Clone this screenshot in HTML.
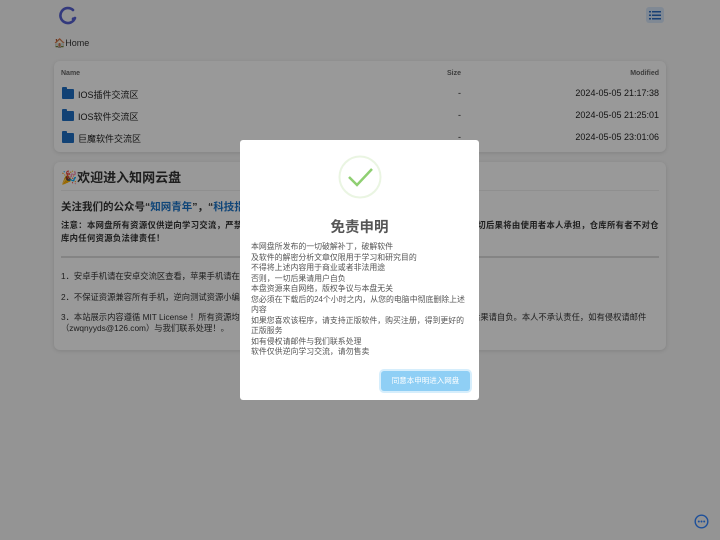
<!DOCTYPE html>
<html><head><meta charset="utf-8"><style>
*{box-sizing:border-box;margin:0;padding:0}
body{width:720px;height:540px;overflow:hidden;background:#f7f7f7;font-family:"Liberation Sans","Noto Sans CJK SC",sans-serif;color:#333;position:relative}
.a{position:absolute;white-space:nowrap}
.card{position:absolute;background:#fff;border-radius:6px;box-shadow:0 1px 4px rgba(0,0,0,.12)}
.folder{display:inline-block;width:12px;height:10px;background:#1e6fc4;border-radius:1px;vertical-align:-1px;margin-right:4px;position:relative}
.folder:before{content:"";position:absolute;left:0;top:-2px;width:5px;height:3px;background:#1e6fc4;border-radius:1px 1px 0 0}
.row{font-size:9px;color:#222}
.b{font-weight:bold}
.blue{color:#1a73c9}
#ov{position:absolute;left:0;top:0;width:720px;height:540px;background:rgba(0,0,0,.4)}
#modal{position:absolute;left:240px;top:140px;width:239px;height:260px;background:#fff;border-radius:3px}
.ml{position:absolute;left:11px;font-size:7.9px;color:#555;white-space:nowrap}
</style></head><body>
<svg class="a" style="left:58px;top:5px" width="20" height="20" viewBox="0 0 20 20"><path d="M15 5 A7.5 7.5 0 1 0 17 13" fill="none" stroke="#5560d0" stroke-width="2.6" stroke-linecap="round"/><circle cx="15.5" cy="14" r="1.8" fill="#5560d0"/></svg>
<div class="a" style="left:646px;top:7px;width:18px;height:16px;background:#d6e4f7;border-radius:3px"></div>
<svg class="a" style="left:649px;top:10px" width="12" height="10"><g fill="#2a6bc2"><rect x="0" y="1" width="2" height="1.5"/><rect x="3" y="1" width="9" height="1.5"/><rect x="0" y="4.5" width="2" height="1.5"/><rect x="3" y="4.5" width="9" height="1.5"/><rect x="0" y="8" width="2" height="1.5"/><rect x="3" y="8" width="9" height="1.5"/></g></svg>
<div class="a" style="left:54px;top:38px;font-size:9px">🏠Home</div>
<div class="card" style="left:54px;top:61px;width:612px;height:91px">
<div class="a" style="left:7px;top:9px;font-size:7px;color:#666;font-weight:bold">Name</div>
<div class="a" style="left:393px;top:9px;font-size:7px;color:#666;font-weight:bold">Size</div>
<div class="a" style="right:7px;top:9px;font-size:7px;color:#666;font-weight:bold">Modified</div>
<div class="a row" style="left:8px;top:27px"><span class="folder"></span>IOS插件交流区</div><div class="a row" style="left:404px;top:27px">-</div><div class="a row" style="right:7px;top:27px">2024-05-05 21:17:38</div>
<div class="a row" style="left:8px;top:49px"><span class="folder"></span>IOS软件交流区</div><div class="a row" style="left:404px;top:49px">-</div><div class="a row" style="right:7px;top:49px">2024-05-05 21:25:01</div>
<div class="a row" style="left:8px;top:71px"><span class="folder"></span>巨魔软件交流区</div><div class="a row" style="left:404px;top:71px">-</div><div class="a row" style="right:7px;top:71px">2024-05-05 23:01:06</div>
</div>
<div class="card" style="left:54px;top:162px;width:612px;height:188px">
<div class="a b" style="left:7px;top:5px;font-size:13px">🎉欢迎进入知网云盘</div>
<div class="a" style="left:7px;top:28px;width:598px;border-top:1px solid #eee"></div>
<div class="a b" style="left:7px;top:37px;font-size:10.5px">关注我们的公众号“<span class="blue">知网青年</span>”，“<span class="blue">科技指南</span>”获取更多资源</div>
<div class="a b" style="left:7px;top:57px;font-size:8.3px;letter-spacing:0.35px">注意：本网盘所有资源仅供逆向学习交流，严禁以任何形式用于商业用途，请在下载后24小时内删除，否则一切后果将由使用者本人承担，仓库所有者不对仓</div>
<div class="a b" style="left:7px;top:70px;font-size:8.3px;letter-spacing:0.35px">库内任何资源负法律责任！</div>
<div class="a" style="left:7px;top:94px;width:598px;border-top:2px solid #ddd"></div>
<div class="a" style="left:7px;top:108px;font-size:8.3px">1．安卓手机请在安卓交流区查看，苹果手机请在苹果交流区查看</div>
<div class="a" style="left:7px;top:129px;font-size:8.3px">2．不保证资源兼容所有手机，逆向测试资源小编亲测可用</div>
<div class="a" style="left:7px;top:149px;font-size:8.3px">3．本站展示内容遵循 MIT License ！所有资源均收集于网络，仅供学习交流使用，如有任何问题，请自行判断，后果请自负。本人不承认责任，如有侵权请邮件</div>
<div class="a" style="left:7px;top:160px;font-size:8.3px">（zwqnyyds@126.com）与我们联系处理！。</div>
</div>
<div id="ov"></div>
<svg class="a" style="left:694px;top:514px" width="15" height="15"><circle cx="7.5" cy="7.5" r="6.3" fill="none" stroke="#1d4f9a" stroke-width="1.4"/><g fill="#1d4f9a"><circle cx="4.8" cy="7.5" r="1"/><circle cx="7.5" cy="7.5" r="1"/><circle cx="10.2" cy="7.5" r="1"/></g></svg>
<div id="modal">
<svg class="a" style="left:98px;top:15px" width="44" height="44"><circle cx="22" cy="22" r="20.5" fill="none" stroke="#eaf5e2" stroke-width="2"/><path d="M11 22 L19 30 L34 14" fill="none" stroke="#8fcf72" stroke-width="2.5"/></svg>
<div class="a b" style="left:0;width:239px;text-align:center;top:76px;font-size:14.5px;color:#555">免责申明</div>
<div class="ml" style="top:101px">本网盘所发布的一切破解补丁，破解软件</div>
<div class="ml" style="top:111.5px">及软件的解密分析文章仅限用于学习和研究目的</div>
<div class="ml" style="top:122px">不得将上述内容用于商业或者非法用途</div>
<div class="ml" style="top:132.5px">否则，一切后果请用户自负</div>
<div class="ml" style="top:143px">本盘资源来自网络，版权争议与本盘无关</div>
<div class="ml" style="top:153.5px">您必须在下载后的24个小时之内，从您的电脑中彻底删除上述</div>
<div class="ml" style="top:164px">内容</div>
<div class="ml" style="top:174.5px">如果您喜欢该程序，请支持正版软件，购买注册，得到更好的</div>
<div class="ml" style="top:185px">正版服务</div>
<div class="ml" style="top:195.5px">如有侵权请邮件与我们联系处理</div>
<div class="ml" style="top:206px">软件仅供逆向学习交流，请勿售卖</div>
<div class="a" style="left:141px;top:231px;width:89px;height:20px;background:#8fcff5;border-radius:3px;box-shadow:0 0 0 2px #d6eefc;color:#fff;font-size:7.5px;text-align:center;line-height:20px">同意本申明进入网盘</div>
</div>
</body></html>
